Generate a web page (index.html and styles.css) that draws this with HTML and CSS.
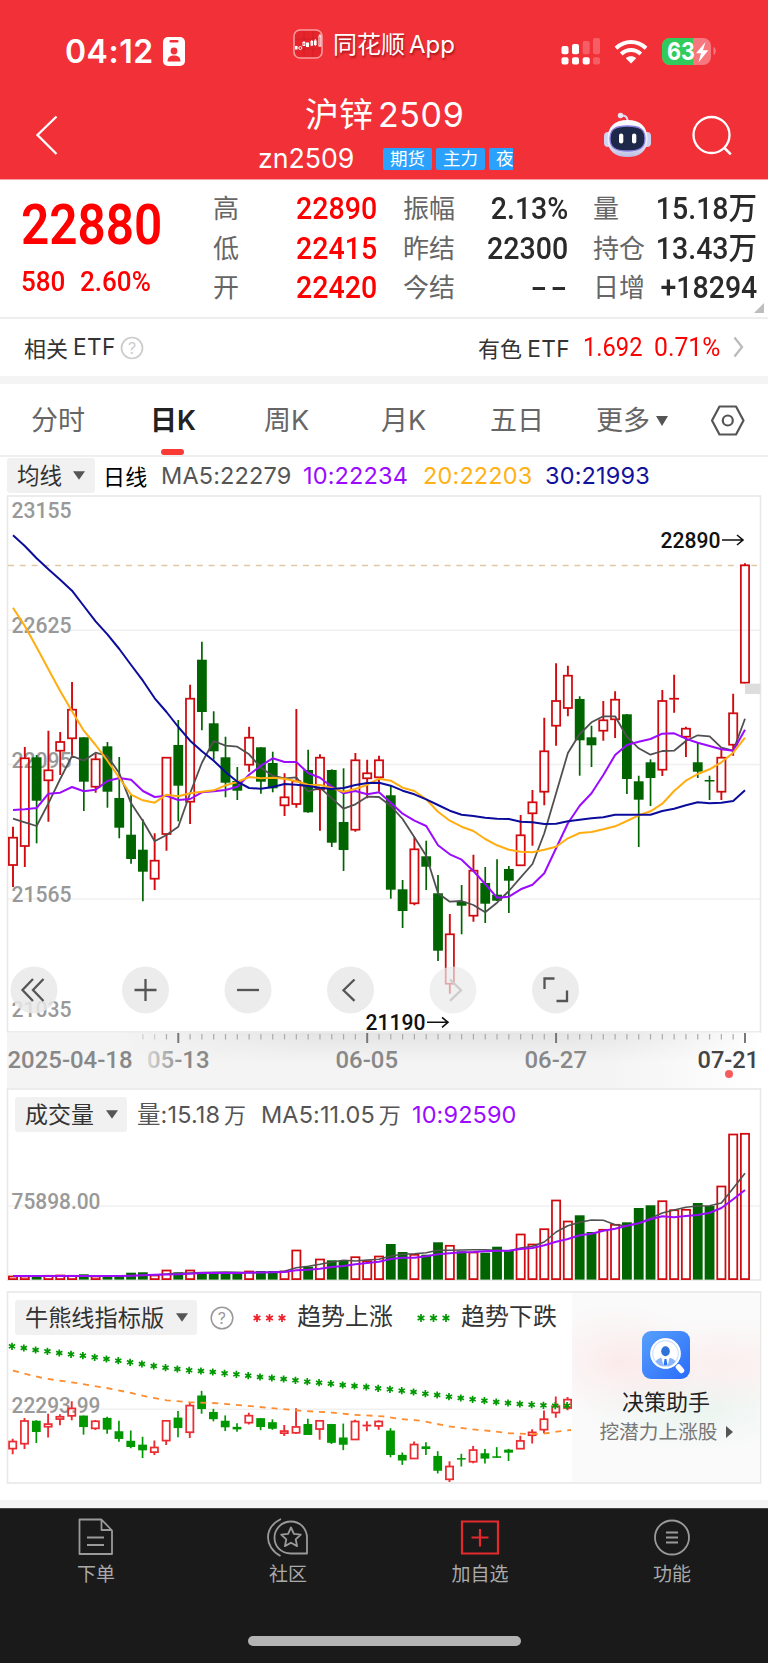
FILE: index.html
```html
<!DOCTYPE html>
<html lang="zh-CN">
<head>
<meta charset="utf-8">
<title>沪锌2509</title>
<link rel="stylesheet" href="styles.css">
</head>
<body>
<header class="top">
  <div class="status">
    <div class="clock"><span class="clock-time">04:12</span>
      <svg width="22" height="29" viewBox="0 0 22 29"><rect width="22" height="29" rx="5" fill="#fff"/><rect x="6.5" y="3" width="9" height="2.6" rx="1.3" fill="#f23038"/><circle cx="11" cy="14" r="3.4" fill="#f23038"/><path d="M4.5 24.5c0-4.5 3-6 6.500-6s6.500 1.500 6.500 6z" fill="#f23038"/></svg>
    </div>
    <div class="brand">
      <svg width="30" height="30" viewBox="0 0 30 30"><rect x="1" y="1" width="28" height="28" rx="6" fill="#e5242c" stroke="#f79a9d" stroke-width="1.600"/><g stroke="#c81d25" stroke-width=".6"><path d="M2 10h26M2 20h26M11 2v26M20 2v26"/></g><g fill="#fff"><rect x="2" y="17" width="2.600" height="3.500"/><rect x="13" y="13.500" width="3" height="4.500"/><rect x="21" y="11.500" width="2.600" height="4.500"/></g><g fill="none" stroke="#fff" stroke-width="1"><circle cx="7.300" cy="19" r="1.500"/><rect x="10" y="13.500" width="1.800" height="3"/><rect x="18" y="12.500" width="1.600" height="3.500"/><path d="M11 12v2M18.800 11v6M22.300 10v7"/><rect x="26" y="7" width="1.800" height="10"/><path d="M27 5v2"/></g></svg>
      <span>同花顺<i>App</i></span>
    </div>
    <svg class="radio" width="156" height="30" viewBox="0 0 156 30">
      <g fill="#fff"><rect x="1.500" y="9" width="7" height="8.300" rx="2"/><rect x="12" y="7" width="7" height="10.300" rx="2"/><rect x="1.500" y="20.300" width="7" height="7.300" rx="2"/><rect x="12" y="20.300" width="7" height="7.300" rx="2"/><rect x="22.700" y="20.300" width="7" height="7.300" rx="2"/><g opacity=".22"><rect x="33" y="20.300" width="7" height="7.300" rx="2"/><rect x="22.700" y="4" width="7" height="13.300" rx="2"/><rect x="33" y="1" width="7" height="16.300" rx="2"/></g>
      <path d="M71 26.500l-5.200-5.300c2.900-2.600 7.500-2.600 10.400 0z"/></g>
      <g fill="none" stroke="#fff" stroke-width="4"><path d="M56 11.300c8.500-8.300 21.500-8.300 30 0"/><path d="M61.200 17c5.700-5.300 13.900-5.300 19.600 0"/></g>
      <rect x="102" y="1" width="49" height="27" rx="8" fill="#f6777d"/><path d="M110 1h23v27h-23a8 8 0 0 1-8-8V9a8 8 0 0 1 8-8z" fill="#30cb5a"/><path d="M153.500 10c3 1 3 7 0 8z" fill="#f6777d"/>
      <text x="107" y="23" class="batt" textLength="28" lengthAdjust="spacingAndGlyphs">63</text><path d="M145.500 5L136 16.200h5l-2.500 9.300 9.800-12.300h-5.300z" fill="#fff"/>
    </svg>
  </div>
  <div class="title-row">
    <svg class="back" width="24" height="42" viewBox="0 0 24 42"><path d="M22.500 1.500L3.500 20 22.500 39" fill="none" stroke="#fff" stroke-width="2.300"/></svg>
    <div class="titles">
      <div class="name">沪锌<i>2509</i></div>
      <div class="code"><span>zn2509</span><div class="tags"><b>期货</b><b>主力</b><b>夜</b></div></div>
    </div>
    <div class="tools">
      <svg width="50" height="46" viewBox="0 0 50 46">
        <defs><linearGradient id="rb" x1="0" y1="0" x2="0" y2="1"><stop offset="0" stop-color="#fff"/><stop offset=".65" stop-color="#e9e9f6"/><stop offset="1" stop-color="#b9bde2"/></linearGradient></defs>
        <path d="M17 4c4-1 7-.5 7.800 5" fill="none" stroke="#dcdcf0" stroke-width="2"/><circle cx="17.500" cy="3.500" r="2.700" fill="#e6e6f5"/>
        <rect x="1" y="20" width="8" height="15" rx="4" fill="#cfd3f0"/><rect x="40" y="20" width="8" height="15" rx="4" fill="#cfd3f0"/>
        <path d="M24.500 8c13 0 20 7 20 19S37 45 24.500 45 4.500 39 4.500 27s7-19 20-19z" fill="url(#rb)"/>
        <path d="M24.500 14c12 0 17.500 3 17.500 12.500S36.500 39 24.500 39 7 36 7 26.500 12.500 14 24.500 14z" fill="#1e2848" stroke="#8a7fe0" stroke-width="1.300"/>
        <rect x="16" y="21.500" width="4.300" height="10" rx="2.100" fill="#fff"/><rect x="29" y="21.500" width="4.300" height="10" rx="2.100" fill="#fff"/>
      </svg>
      <svg width="42" height="42" viewBox="0 0 42 42"><circle cx="19.500" cy="20" r="18" fill="none" stroke="#fff" stroke-width="2.300"/><path d="M32 32.500l6.800 6.800" stroke="#fff" stroke-width="2.500"/></svg>
    </div>
  </div>
</header>

<section class="quote">
  <div class="last"><div class="price din">22880</div><div class="chg"><span class="din">580</span><span class="din">2.60%</span></div></div>
  <dl class="stats">
    <dt>高</dt><dd class="up"><span class="din">22890</span></dd><dt>振幅</dt><dd><span class="din">2.13%</span></dd><dt>量</dt><dd><span class="din">15.18万</span></dd>
    <dt>低</dt><dd class="up"><span class="din">22415</span></dd><dt>昨结</dt><dd><span class="din">22300</span></dd><dt>持仓</dt><dd><span class="din">13.43万</span></dd>
    <dt>开</dt><dd class="up"><span class="din">22420</span></dd><dt>今结</dt><dd><span class="din dash">--</span></dd><dt>日增</dt><dd><span class="din">+18294</span></dd>
  </dl>
  <svg class="corner" width="10" height="10" viewBox="0 0 10 10"><path d="M10 0v10H0z" fill="#bdbdbd"/></svg>
</section>

<section class="etf">
  <div class="etf-l">相关<i>ETF</i><svg width="24" height="24" viewBox="0 0 24 24"><circle cx="12" cy="12" r="10.500" fill="none" stroke="#ccc" stroke-width="1.700"/><text x="12" y="17.500" class="q q-light">?</text></svg></div>
  <div class="etf-r"><span>有色<i>ETF</i></span><span class="din e1">1.692</span><span class="din e2">0.71%</span><svg width="11" height="22" viewBox="0 0 11 22"><path d="M1.500 1.500L9 11l-7.500 9.500" fill="none" stroke="#bbb" stroke-width="2.300"/></svg></div>
</section>

<nav class="tabs">
  <span>分时</span><span class="on">日K</span><span>周K</span><span>月K</span><span>五日</span><span>更多<svg width="12" height="10" viewBox="0 0 12 10"><path d="M0 0h12L6 10z" fill="#555"/></svg></span>
  <svg width="34" height="31" viewBox="0 0 34 31"><path d="M8.500 1.500h16.500L32.500 15.500 25 29.500h-16.500L1 15.500z" fill="none" stroke="#555" stroke-width="2.200" stroke-linejoin="round"/><circle cx="16.800" cy="15.500" r="5" fill="none" stroke="#555" stroke-width="2.200"/></svg>
</nav>

<div class="ma-row">
  <span class="pick">均线<svg width="12" height="9" viewBox="0 0 13 9"><path d="M0 0h13L6.500 9z" fill="#555"/></svg></span>
  <span class="day">日线</span><span class="m5">MA5:22279</span><span class="m10">10:22234</span><span class="m20">20:22203</span><span class="m30">30:21993</span>
</div>

<section class="kline">
  <svg id="k" width="768" height="593" viewBox="0 495 768 593"></svg>
</section>

<section class="panel volume">
  <svg id="v" width="768" height="202" viewBox="0 1088 768 202"></svg>
  <div class="legend">
    <span class="pick">成交量<svg width="12" height="9" viewBox="0 0 13 9"><path d="M0 0h13L6.500 9z" fill="#555"/></svg></span>
    <span class="v0">量:15.18<u>万</u></span><span class="v5">MA5:11.05<u>万</u></span><span class="m10">10:92590</span>
  </div>
</section>

<section class="panel bull">
  <svg id="b" width="768" height="210" viewBox="0 1290 768 210"></svg>
  <div class="legend">
    <span class="pick">牛熊线指标版<svg width="12" height="9" viewBox="0 0 13 9"><path d="M0 0h13L6.500 9z" fill="#555"/></svg></span>
    <svg class="help" width="24" height="24" viewBox="0 0 24 24"><circle cx="12" cy="12" r="10.800" fill="none" stroke="#999" stroke-width="1.500"/><text x="12" y="17.500" class="q">?</text></svg>
    <svg class="stars" width="34" height="12" viewBox="0 0 34 12" id="s1"></svg><span class="trend">趋势上涨</span>
    <svg class="stars two" width="34" height="12" viewBox="0 0 34 12" id="s2"></svg><span class="trend">趋势下跌</span>
  </div>
  <aside class="helper">
    <svg width="48" height="48" viewBox="0 0 48 48">
      <defs><linearGradient id="hb" x1="0" y1="0" x2="1" y2="1"><stop offset="0" stop-color="#58a0fb"/><stop offset="1" stop-color="#2a6cfb"/></linearGradient></defs>
      <rect width="48" height="48" rx="9" fill="url(#hb)"/><path d="M36.500 36l3 3.500" stroke="#fff" stroke-width="5.500" stroke-linecap="round"/>
      <circle cx="23.500" cy="22.500" r="13.700" fill="#fff" stroke="#cfe2ff" stroke-width="3"/><circle cx="23.500" cy="22.500" r="14.300" fill="none" stroke="#fff" stroke-width="1.800"/><path d="M13.500 30.500c1.500-2.500 3.500-3.300 6-3.800l2 8.500c-3.500-.5-6-2-8-4.700zM33.500 30.500c-1.500-2.500-3.500-3.300-6-3.800l-2 8.500c3.500-.5 6-2 8-4.700z" fill="#8ab5fb"/><path d="M22.500 28h2l1 6.500h-4z" fill="#2f72f2"/><ellipse cx="23.500" cy="20.300" rx="4.300" ry="5" fill="#2f72d8"/>
    </svg>
    <strong>决策助手</strong>
    <span>挖潜力上涨股<svg width="7" height="12" viewBox="0 0 7 12"><path d="M0 0l7 6-7 6z" fill="#555"/></svg></span>
  </aside>
</section>

<footer class="bar">
  <div class="items">
    <a><svg width="42" height="40" viewBox="0 0 42 40"><path d="M4.500 3h22L37 14v23.500H4.500zM26.500 3v10.500H37M12 21h17M12 28.500h17" transform="translate(0 -.5)" fill="none" stroke="#9a9a9a" stroke-width="1.800" stroke-linejoin="round"/></svg>下单</a>
    <a><svg width="42" height="40" viewBox="0 0 42 40"><g fill="none" stroke="#9a9a9a" stroke-width="1.800" stroke-linejoin="round"><path d="M40 21v15.500H24C13.500 36.500 7.500 29 7.500 20.500S14.500 4.500 24 4.500 40 12 40 21z"/><path d="M14 2C4 7 1 14 1 20.500S5 34.500 13.500 39"/><path d="M24 10.500l2.900 6.300 6.900.8-5.100 4.700 1.400 6.800-6.100-3.400-6.100 3.400 1.400-6.800-5.100-4.700 6.900-.8z"/></g></svg>社区</a>
    <a><svg width="42" height="40" viewBox="0 0 42 40"><path d="M3 4.500h36v32H3zM21 12v17.500M12.500 20.500h17" fill="none" stroke="#e5292c" stroke-width="2.200"/></svg>加自选</a>
    <a><svg width="42" height="40" viewBox="0 0 42 40"><circle cx="21" cy="20.500" r="17" fill="none" stroke="#9a9a9a" stroke-width="1.800"/><path d="M15 15.500h12M15 20.500h12M15 25.500h12" stroke="#9a9a9a" stroke-width="1.800"/></svg>功能</a>
  </div>
  <div class="home"></div>
</footer>
<script src="chart.js"></script>
</body>
</html>
```
FILE: styles.css
```css
* { box-sizing: border-box; }
body { margin: 0; width: 768px; height: 1663px; background: #fff; color: #333; font-family: Inter, "Noto Sans CJK SC", sans-serif; overflow: hidden; }
svg { display: block; flex: none; }
i, u { font-style: normal; text-decoration: none; }
.din { display: inline-block; font-family: Roboto, "Noto Sans CJK SC", sans-serif; transform: scaleX(.92); transform-origin: 0 50%; white-space: nowrap; }

.top { height: 180px; background: #f23038; color: #fff; border-bottom: 1px solid #f9a4a8; }
.status { display: grid; grid-template-columns: 293px 267px 1fr; height: 90px; padding-top: 29px; }
.clock { display: flex; align-items: center; gap: 11px; height: 45px; padding-left: 65px; }
.clock-time { font-size: 32px; font-weight: 600; letter-spacing: .5px; width: 87px; white-space: nowrap; }
.brand { display: flex; align-items: flex-start; gap: 10px; font-size: 24px; line-height: 32px; text-shadow: 1px 2px 2px rgba(90,0,0,.5); white-space: nowrap; }
.brand i { margin-left: 4px; }
.radio { margin-top: 8px; }
.batt { font: 700 24.500px Inter, sans-serif; fill: #fff; }
.title-row { display: grid; grid-template-columns: 224px 1fr 196px; padding: 0 34px; height: 89px; }
.back { margin-top: 25px; }
.titles { display: flex; flex-direction: column; align-items: flex-start; }
.name { font-size: 34px; line-height: 44px; margin: 3px 0 0 47px; white-space: nowrap; font-weight: 400; }
.name i { margin-left: 5px; letter-spacing: .6px; }
.code { display: flex; align-items: center; gap: 29px; height: 32px; margin-top: 5px; }
.code span { font-size: 26.700px; width: 96px; }
.tags { display: flex; gap: 4px; width: 130px; height: 22px; margin-top: 1px; overflow: hidden; }
.tags b { flex: none; width: 49px; height: 22px; line-height: 21px; font-size: 17.500px; font-weight: 400; text-align: center; background: #2aa1fc; border-radius: 2px; }
.tags b:last-child { text-align: left; padding-left: 7px; }
.tools { display: flex; gap: 39px; padding-left: 65px; }
.tools svg:first-child { margin-top: 22px; }
.tools svg:last-child { margin-top: 25px; }

.quote { position: relative; display: flex; height: 139px; border-bottom: 2px solid #eee; }
.last { width: 213px; padding-left: 21px; color: #fe0000; }
.price { font-size: 55px; font-weight: 600; line-height: 60px; margin-top: 15px; transform: scaleX(.9); }
.chg { display: flex; font-size: 28px; line-height: 36px; font-weight: 500; margin-top: 9px; }
.chg .din { width: 59px; transform: scaleX(.93); }
.stats { display: grid; grid-template-columns: 70px 94px 106px 85px 105px 84px; grid-template-rows: repeat(3, 39.600px); margin: 9px 0 0; }
.stats dt, .stats dd { margin: 0; line-height: 39.600px; white-space: nowrap; }
.stats dt { font-size: 26px; color: #666; }
.stats dt:nth-of-type(3n+2) { padding-left: 26px; }
.stats dt:nth-of-type(3n) { padding-left: 25px; }
.stats dd { font-size: 31px; font-weight: 500; color: #2a2a2a; text-align: right; display: flex; justify-content: flex-end; }
.stats dd .din { transform-origin: 100% 50%; }
.stats dd .dash { transform: scaleX(1.55); letter-spacing: 2.500px; margin-right: -3.500px; }
.stats .up { color: #fe0000; }
.corner { position: absolute; right: 4px; bottom: 4px; }

.etf { display: flex; justify-content: space-between; align-items: center; height: 65px; padding: 0 24px 2px; border-bottom: 8px solid #f4f4f4; font-size: 22px; color: #333; }
.etf-l { display: flex; align-items: center; }
.etf-l i, .etf-r i { margin-left: 5px; font-size: 22.700px; letter-spacing: .4px; }
.etf-l svg { margin: 2px 0 0 4px; }
.etf-r { display: flex; align-items: center; white-space: nowrap; }
.etf-r .din { font-size: 26px; color: #fe0000; transform: scaleX(.95); }
.etf-r .e1 { width: 71px; margin-left: 13px; transform: scaleX(.91); }
.etf-r .e2 { width: 79px; }
.q { font: 16px Inter, sans-serif; fill: #999; text-anchor: middle; }
.q-light { fill: #ccc; }

.tabs { display: grid; grid-template-columns: 119px 114px 117px 109px 106px 115px 34px; align-items: center; padding: 2px 0 0 31px; height: 73px; border-bottom: 2px solid #efefef; font-size: 27px; color: #666; }
.tabs span { position: relative; display: flex; align-items: center; gap: 6px; line-height: 40px; white-space: nowrap; }
.tabs .on { color: #222; font-weight: 600; }
.tabs .on::after { content: ""; position: absolute; left: 11px; top: 48px; width: 23px; height: 6px; border-radius: 3px; background: #fb3a35; }

.ma-row { display: flex; align-items: center; height: 38px; padding: 0 0 1px 7px; font-size: 23.500px; letter-spacing: .15px; white-space: nowrap; }
.pick { display: flex; align-items: center; gap: 11px; height: 35px; padding: 0 10px; border-radius: 3px; background: #f1f1f1; color: #333; font-size: 22.500px; line-height: 34px; letter-spacing: 0; }
.day { margin: -2px 0 0 8px; width: 58px; color: #000; font-size: 22px; }
.m5 { width: 142px; color: #555; }
.m10 { width: 120px; color: #9b0cff; }
.m20 { width: 122px; color: #ffb218; }
.m30 { color: #12129c; }
.kline { height: 593px; }
.panel { position: relative; }
.volume { height: 202px; }
.bull { height: 218px; border-bottom: 8px solid #f4f4f4; }
.legend { position: absolute; left: 15px; top: 9px; display: flex; align-items: center; height: 35px; font-size: 23.500px; line-height: 34px; letter-spacing: .1px; color: #555; white-space: nowrap; }
.legend u { margin-left: 4px; font-size: 22px; }
.legend .pick { font-size: 23px; gap: 12px; padding: 0 9px 0 10px; letter-spacing: 0; }
.v0 { width: 124px; margin-left: 10px; }
.v5 { width: 151px; }
.bull .legend { top: 10px; }
.bull .legend .pick { font-size: 23.200px; }
.help { margin-left: 13px; }
.stars { margin-left: 19px; }
.stars.two { margin-left: 24px; }
.trend { margin: -2px 0 0 10px; color: #333; font-size: 23.900px; }
.helper { position: absolute; left: 572px; top: 3px; width: 188px; height: 189px; display: flex; flex-direction: column; align-items: center; padding: 38px 0 0 0; background: radial-gradient(ellipse 45% 30% at 24% 36%, rgba(255,205,205,.3), transparent), radial-gradient(ellipse 70% 25% at 80% 38%, rgba(255,210,210,.28), transparent), radial-gradient(ellipse 60% 22% at 65% 62%, rgba(205,235,220,.35), transparent), #fafafa; white-space: nowrap; }
.helper strong { font-weight: 400; font-size: 22px; line-height: 28px; margin-top: 9px; color: #222; }
.helper span { display: flex; align-items: center; gap: 8px; font-size: 19.700px; line-height: 30px; margin-top: 1px; color: #777; }

.bar { height: 155px; background: #1a1a1a; border-top: 1px solid #444; }
.items { display: grid; grid-template-columns: repeat(4, 192px); height: 127px; padding-top: 8px; }
.items a { display: flex; flex-direction: column; align-items: center; gap: 4.500px; font-size: 19px; line-height: 26px; color: #aaa; }
.home { width: 273px; height: 10px; margin: 0 auto; border-radius: 5px; background: #b4b4b4; }

.axis { font: 500 22px Roboto, sans-serif; fill: #999; }
.mark { font: 500 22px Roboto, sans-serif; fill: #111; }
.date { font: 500 23.500px Roboto, sans-serif; fill: #888; }
```
FILE: chart.js
```js
// Each candle: [rising, high, body top, body bottom, low, volume bar top]
const candles = [
[1,826.7,837.7,865,887,1276],[1,747,758.3,846,867,1276],[0,755,757.3,800.7,843.3,1276],[1,730.7,770.3,780.3,821.7,1275.3],
[1,732,742,750.7,775,1275],[1,682,709.7,738.3,755.3,1275.3],[0,737.3,737.3,781.7,811,1274.3],[1,754,759.3,786.7,792.7,1276],
[0,742,746.3,791.7,807.7,1275.7],[0,757,798,827.7,838.3,1275.7],[0,795,834.7,859,863.7,1272.7],[0,819.3,849.7,871.7,901.3,1272.3],
[1,833.3,860.7,878.7,890,1275],[1,757.3,757.7,834,850.7,1270],[0,720,745,785.7,821.3,1272.3],[1,684.7,698.7,801.7,824,1270],
[0,641.7,659.7,712,730.3,1273.3],[0,711.3,723.3,751.3,759.7,1273],[0,736.7,757.3,782.7,797.3,1273],[0,767,781,790.7,800,1273],
[1,726.7,737.7,764.7,771.7,1271],[0,747.3,747.3,781.7,793.7,1271],[0,751.7,763,788.3,792.3,1271],[1,773.3,797.3,805.3,816,1271],
[1,709,781.3,804,807.7,1250],[0,749.7,770,812.3,812.7,1266.7],[1,754.3,757.7,789.3,830.7,1259],[0,769.3,770,842.7,847,1260.3],
[0,768.3,822,850,871,1260.7],[1,753,760.3,829.7,831.7,1256.7],[1,759.7,773.3,778.3,798.3,1260.7],[1,755.7,760.3,777.3,791.7,1256],
[0,786,795.3,889.7,898.7,1244],[0,880,889.3,911,928,1252],[1,837.3,849.3,903.3,905.3,1254.3],[0,840.7,856.3,866.7,890,1254.7],
[0,875,893.3,950.7,961,1242.3],[1,914,934.3,983.7,993.7,1245.3],[0,885,901.7,905.7,934.3,1251.3],[1,854.7,870.7,915.7,921.7,1252],
[0,867,883,903.7,923,1252.7],[0,859.3,894.7,900.7,901,1246.7],[0,866,869,880.7,913,1250.7],[1,815,835.3,865.3,866,1234],
[1,790,802.3,813.3,845.7,1244],[1,717.7,751.3,791.7,805.3,1228.7],[1,663.3,701,725.7,745.7,1200],[1,665.7,675.7,708,716.3,1221],
[0,696.3,699,740.3,775.7,1215.3],[0,725.7,737.3,745.3,767,1232],[1,701,720.3,730.7,740.7,1229.3],[1,691.3,699.7,719.3,738,1224.3],
[0,714,714.3,779,794,1222.3],[0,775.7,781.3,799.7,847,1208],[0,759.3,762.3,778,806,1205.3],[1,690,701,769.7,776,1200.7],
[1,674.7,698,699.5,712.7,1209.7],[1,726.7,728.7,736.7,757,1209.3],[0,742.3,762.3,771.7,778,1203],[0,775.7,780,781.5,800,1206],
[1,749.3,757.7,791.7,800,1186],[1,693.7,713.3,744.7,755.7,1134],[1,563.3,565.3,682.7,683.3,1133.3]];

const ma5 = [818.7,822.3,826,803.3,779,756,760.7,752.7,756,773.3,803.3,821,841.3,835,826.7,793.3,762.7,741,745.7,746.7,754.3,767.7,775.7,778.3,777.3,791.7,787.7,798.3,808.7,804.3,796.7,797,806,819,837.3,855.7,893.3,901.7,901,905,912.3,902.7,891,877.3,864,833.3,793.3,753,734,722.3,716.3,716.3,736.7,748.3,754.7,751,750.7,741,735.3,736.3,747.7,750.7,718.7];
const ma10 = [810,809.3,808,793.7,792.7,787,791.3,789.7,781,778,779.7,791,797,795.7,800,799,792.3,791.3,790,786.7,774.7,765.7,758.3,762,762,773,777.7,786.7,793.3,791,794.3,792.3,802.7,813.7,820.7,826,845.3,854.3,859.7,871,884,897.7,896.7,889.3,884.7,873.3,848.3,823.3,805.7,793.3,775,755,745,741.7,739,733.7,733.3,738.7,742.7,746,749.3,750.7,729.7];
const ma20 = [607.7,626,647.3,669.3,691,711.3,730.7,745,760.7,777.7,794.7,800.3,802.7,794.7,796.3,793.3,791.7,790.3,785.3,782,777,778.3,777.7,778.7,781.3,784.7,785,788,791.7,789,784.7,778.7,780.7,787.7,791,799.3,811.7,820.7,826.7,831,839,845.3,849.7,851.7,852.3,849.7,846.7,838.3,833,832,829.3,826.3,821,815.3,811.3,803.7,791,780.7,774,769.3,762.3,752.7,737.7];
const ma30 = [535.3,546,558.3,569.3,579.7,590.7,606,621.3,634.3,649,665,680.7,698.3,712,727,740.7,751.3,760.7,772,781.7,788,788.7,787,784,784.7,786,787.7,789,788,785,783,782.7,785.7,790.7,794.3,799.3,805,810.7,814.7,816,817.7,818.7,819,821.7,822.3,824,823.7,821.3,819.7,818.3,817.3,814.7,814.7,814.7,814.7,811,808.7,805.3,802.3,803.3,802.7,801,790.3];
const vol5 = [1276,1276,1276,1276,1276,1276,1275.7,1276,1276,1276,1275.7,1275.3,1275,1274,1273.3,1273,1272.5,1272.2,1272,1272.3,1272.7,1272.5,1272.3,1271.3,1267.7,1266.3,1264.3,1262,1260.3,1261,1260,1259.3,1256,1254.3,1253.7,1252.7,1250.3,1250.3,1250,1249.7,1249.7,1250.3,1251,1248,1246.3,1242,1232,1225.7,1222.3,1220,1220.3,1224.7,1225.7,1223.3,1218.3,1213,1210,1207.3,1206,1205.7,1203,1188.3,1173.3];
const vol10 = [1276,1276,1276,1276,1276,1276,1276,1276,1276,1276,1275.7,1275.3,1274.7,1274.5,1274.3,1273.7,1273,1273,1273,1273,1272.7,1272.5,1272.3,1272,1270.3,1269.7,1268.7,1267,1266,1264.3,1263,1261.7,1259,1257.7,1257.7,1256.3,1254.3,1253.3,1252.3,1252,1251.3,1250.7,1250.7,1249,1248,1245.3,1241.7,1239,1235.3,1233.7,1230.7,1228.7,1225.7,1223.3,1219.3,1216.3,1217.3,1216,1215,1212.7,1208,1199.3,1190];
const bear = [184,189,195,199,204,208,212,217,222,227,232,237,243,248,252,256,258,261,265,268,272,276,279,282,286,290,293,296,300,303,306,310,313,317,321,326,330,335,339,343,347,351,354,357,359,361,362,362];

const X = i => 13 + 11.806 * i;
const line = (d, c, w = 2) => `<polyline points="${d.map((y, i) => X(i).toFixed(1) + ',' + y).join(' ')}" fill="none" stroke="${c}" stroke-width="${w}" stroke-linejoin="round"/>`;
const rule = (y, x2 = 760) => `<path d="M8 ${y}H${x2}" stroke="#f0f0f0" stroke-width="1.500"/>`;
const label = (t, x, y, w, c = 'axis', extra = '') => `<text x="${x}" y="${y}" textLength="${w}" lengthAdjust="spacingAndGlyphs" class="${c}" ${extra}>${t}</text>`;
const arrow = (x, y) => `<path d="M${x} ${y}h21m-6-5l6 5-6 5" fill="none" stroke="#111" stroke-width="1.600"/>`;

function candle(up, x, h, t, b, l, red, green, w) {
  if (!up) return `<path d="M${x} ${h}V${l}" stroke="${green}" stroke-width="1.700"/><rect x="${x - w / 2}" y="${t}" width="${w}" height="${Math.max(b - t, 1.5)}" fill="${green}"/>`;
  const wicks = `<path d="M${x} ${h}V${t}M${x} ${b}V${l}" stroke="${red}" stroke-width="1.900"/>`;
  if (b - t < 2) return wicks + `<path d="M${x - w / 2} ${(t + b) / 2}h${w}" stroke="${red}" stroke-width="1.800"/>`;
  return wicks + `<rect x="${x - w / 2 + .8}" y="${t}" width="${w - 1.6}" height="${b - t}" fill="none" stroke="${red}" stroke-width="1.750"/>`;
}
function star(x, y, c, r = 3.6) {
  let d = '';
  for (const a of [90, 30, -30]) {
    const dx = r * Math.cos(a * Math.PI / 180), dy = r * Math.sin(a * Math.PI / 180);
    d += `M${(x - dx).toFixed(2)} ${(y - dy).toFixed(2)}L${(x + dx).toFixed(2)} ${(y + dy).toFixed(2)}`;
  }
  return `<path d="${d}" stroke="${c}" stroke-width="1.700"/>`;
}

let s = `<defs><linearGradient id="ax" x1="0" x2="1"><stop offset=".8" stop-color="#f4f4f4"/><stop offset="1" stop-color="#fff"/></linearGradient><linearGradient id="sh" x1="0" x2="0" y1="0" y2="1"><stop offset="0" stop-color="#e4e4e4"/><stop offset="1" stop-color="#e4e4e4" stop-opacity="0"/></linearGradient><linearGradient id="fade" x1="0" x2="1"><stop offset=".15" stop-color="#000"/><stop offset=".4" stop-color="#fff"/><stop offset=".75" stop-color="#fff"/><stop offset="1" stop-color="#000"/></linearGradient><mask id="mk"><rect x="7" y="1032" width="753" height="56" fill="url(#fade)"/></mask><linearGradient id="df" gradientUnits="userSpaceOnUse" x1="143" x2="185" y1="0" y2="0"><stop offset="0" stop-color="#ddd"/><stop offset="1" stop-color="#888"/></linearGradient></defs>`;
s += '<rect x="7.500" y="496" width="753" height="536" fill="#fff" stroke="#e8e8e8" stroke-width="1.600"/>' + [630.3, 764.5, 899].map(y => rule(y)).join('');
s += label(21035, 11.5, 1017.3, 60) + [[23155, 518.3], [22625, 633.2], [22095, 767.8], [21565, 902]].map(a => label(a[0], 11.5, a[1], 60)).join('');
s += '<path d="M8 565.600H757" stroke="#dfc8a4" stroke-width="1.500" stroke-dasharray="6 5.800"/>';
s += candles.map((c, i) => candle(c[0], X(i), c[1], c[2], c[3], c[4], '#d00a0e', '#006400', 9.8)).join('');
s += line(ma5, '#505050', 1.8) + line(ma10, '#9b0cff') + line(ma20, '#ffad10') + line(ma30, '#0c0c9c');
s += '<rect x="745" y="683.700" width="15.500" height="10.300" fill="#ddd"/>';
s += label(22890, 660.5, 548, 60, 'mark') + arrow(722, 540) + label(21190, 365.5, 1030, 60, 'mark') + arrow(427, 1022.3);
[34, 145.5, 248, 350.5, 453, 555.5].forEach((x, i) => {
  s += `<circle cx="${x}" cy="990" r="23.500" fill="#e9e9e9" fill-opacity="${i === 4 ? .7 : .85}"/>`;
});
const icon = (d, c = '#555') => `<path d="${d}" fill="none" stroke="${c}" stroke-width="2.300"/>`;
s += icon('M33 979l-10.500 11 10.500 11M43.500 979l-10.500 11 10.500 11') + icon('M145.500 979v22M134.500 990h22') + icon('M237 990h22') + icon('M354.500 979.500l-11 10.700 11 10.700') + icon('M450 979.500l11 10.700-11 10.700', '#ccc') + icon('M544.500 989v-10.500h10M567 990.500v10.500h-10.500');
s += '<rect x="7" y="1032.500" width="753" height="56" fill="url(#ax)"/><rect x="7" y="1032.500" width="753" height="30" fill="url(#sh)" mask="url(#mk)"/>';
for (let i = 11; i < 63; i++) {
  const major = (i - 14) % 16 === 0;
  s += `<path d="M${X(i)} ${major ? 1033 : 1034}v${major ? 10 : 5.5}" stroke="${major ? '#777' : '#aaa'}" stroke-width="${major ? 2 : 1.2}" opacity="${i < 13 ? .5 : 1}"/>`;
}
s += label('2025‑04‑18', 7.5, 1067.5, 125, 'date') + label('05‑13', 147, 1067.5, 62.5, 'date', 'style="fill:url(#df)"') + label('06‑05', 335.5, 1067.5, 62.5, 'date') + label('06‑27', 524.5, 1067.5, 62.5, 'date') + label('07‑21', 697.5, 1067.5, 61.5, 'date', 'style="fill:#444"');
s += '<circle cx="729" cy="1074" r="4" fill="#f65c5c"/>';
document.getElementById('k').innerHTML = s;

s = '<rect x="7.500" y="1089" width="753" height="191" fill="#fff" stroke="#e8e8e8" stroke-width="1.600"/>' + rule(1206) + label('75898.00', 11.5, 1209, 89);
s += candles.map((c, i) => {
  const x = X(i) - 4.9, y = c[5];
  return c[0] ? `<rect x="${x + .8}" y="${y + .5}" width="8.200" height="${1278.6 - y}" fill="none" stroke="#d00a0e" stroke-width="1.750"/>` : `<rect x="${x}" y="${y}" width="9.800" height="${1279.6 - y}" fill="#006400"/>`;
}).join('') + line(vol5, '#505050', 1.6) + line(vol10, '#9b0cff');
document.getElementById('v').innerHTML = s;

const m = y => 1421 + (y - 758.3) * .2587;
s = '<defs><clipPath id="cp"><rect x="8" y="1292" width="564" height="191"/></clipPath></defs><rect x="7.500" y="1292" width="753" height="191" fill="#fff" stroke="#e8e8e8" stroke-width="1.600"/>' + rule(1409.3, 572) + label('22293.99', 11.5, 1412.7, 89) + '<g clip-path="url(#cp)">';
s += candles.slice(0, 48).map((c, i) => candle(c[0], X(i) - .3, m(c[1]), m(c[2]), m(c[3]), m(c[4]), '#eb2d33', '#009800', 8.8)).join('');
s += '<polyline points="13,1370.700 43.300,1378.300 71.700,1382.300 106.700,1388 130,1392.700 146.700,1396.700 166.700,1400.300 190,1402.300 213,1403 260,1407 300,1410.700 333,1412.700 353,1414.700 383,1416.300 400,1419 423,1421 446.700,1426 466.700,1428.700 490,1431 510,1433.300 526.700,1434 543,1433.700 556.700,1431.700 571,1430" fill="none" stroke="#ff8c2e" stroke-width="1.800" stroke-dasharray="6 5.900"/>';
s += bear.map((y, i) => star(12 + 11.81 * i, 1285 + y / 3, '#009800')).join('') + '</g>';
document.getElementById('b').innerHTML = s;
document.getElementById('s1').innerHTML = [4, 16.5, 29].map(x => star(x, 6, '#ee2028', 3.9)).join('');
document.getElementById('s2').innerHTML = [4, 16.5, 29].map(x => star(x, 6, '#009800', 3.9)).join('');
```
